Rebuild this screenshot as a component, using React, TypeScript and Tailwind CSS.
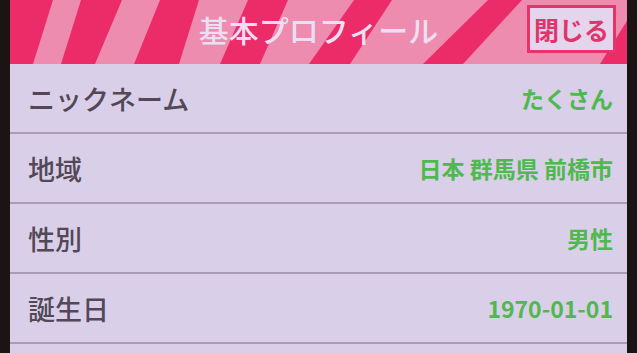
import React from "react";

interface ProfileRow {
	label: string;
	value: string;
}

const rows: ProfileRow[] = [
	{ label: "ニックネーム", value: "たくさん" },
	{ label: "地域", value: "日本 群馬県 前橋市" },
	{ label: "性別", value: "男性" },
	{ label: "誕生日", value: "1970-01-01" },
];

// dark stripes of the header, in screen coordinates
const stripes: string[] = [
	"0,0 43,0 23,64 -25,64",
	"71,0 112,0 85,64 51,64",
	"150,0 189,0 169,64 124,64",
	"238,0 278,0 250,64 210,64",
	"344,0 382,0 340,64 299,64",
	"478,0 512,0 453,64 413,64",
	"630,0 670,0 630,64 590,64",
];

const Stripes: React.FC = () => (
	<svg
		className="absolute inset-0 h-full w-full"
		viewBox="0 0 617 64"
		preserveAspectRatio="none"
	>
		<rect x="0" y="0" width="617" height="64" fill="#ee8cb0" />
		{stripes.map((p) => (
			<polygon key={p} points={p} fill="#ec2c69" />
		))}
	</svg>
);

const App: React.FC = () => {
	return (
		<div
			className="flex h-[353px] w-[637px] overflow-hidden bg-[#1b1314]"
			style={{ fontFamily: '"Noto Sans CJK JP", "Noto Sans", sans-serif' }}
		>
			<div className="w-[10px] shrink-0" />

			<div className="flex w-[617px] shrink-0 flex-col bg-[#dacfe8]">
				<header className="relative grid h-[64px] shrink-0 grid-cols-[1fr_auto_1fr] items-center pb-[6px]">
					<Stripes />
					<div />
					<h1 className="relative text-[30px] leading-none font-medium text-[#ecdff2]">
						基本プロフィール
					</h1>
					<div className="relative flex justify-end pr-[11px]">
						<button className="flex h-[48px] w-[89px] items-center justify-center border-[3px] border-[#e6346a] bg-[#e4d5ec] text-[25px] leading-none font-bold text-[#e0356b]">
							閉じる
						</button>
					</div>
				</header>

				{rows.map((row) => (
					<div
						key={row.label}
						className="flex h-[70px] shrink-0 items-center justify-between border-b-2 border-[#a99db6] pr-[14px] pl-[18px]"
					>
						<span className="text-[27px] leading-none font-medium text-[#524857]">
							{row.label}
						</span>
						<span className="text-[23px] leading-none font-semibold text-[#4db94e]">
							{row.value}
						</span>
					</div>
				))}
			</div>

			<div className="w-[10px] shrink-0" />
		</div>
	);
};

export default App;
